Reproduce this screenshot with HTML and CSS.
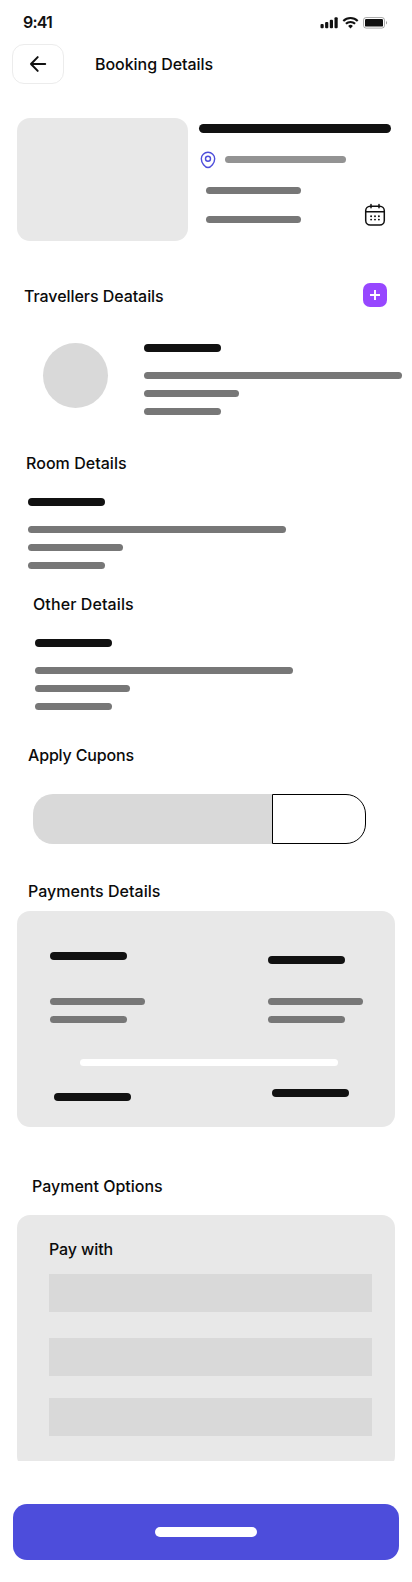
FILE: index.html
```
<!DOCTYPE html>
<html lang="en">
<head>
<meta charset="utf-8">
<title>Booking Details</title>
<link rel="stylesheet" href="styles.css">
</head>
<body>
<div class="status">
  <span class="time">9:41</span>
  <svg class="status-icons" width="70" height="14" viewBox="0 0 70 14">
    <g fill="#111">
      <rect x="0.5" y="8" width="3.2" height="4.2" rx="1"/>
      <rect x="5.1" y="6" width="3.200" height="6.200" rx="1"/>
      <rect x="9.8" y="3.700" width="3.200" height="8.500" rx="1"/>
      <rect x="14.5" y="1.300" width="3.200" height="10.900" rx="1"/>
    </g>
    <g fill="none" stroke="#111" stroke-width="2.1">
      <path d="M23.300 4.900A10.400 10.400 0 0 1 37.700 4.900"/>
      <path d="M25.900 7.800A6.600 6.600 0 0 1 35.100 7.800"/>
    </g>
    <path d="M28.100 9.900A3.600 3.600 0 0 1 32.900 9.900L30.500 12.400Z" fill="#111"/>
    <rect x="43.500" y="1.500" width="21" height="10.600" rx="2.600" fill="none" stroke="#111" stroke-opacity=".35"/>
    <rect x="45" y="3" width="18" height="7.600" rx="1.200" fill="#111"/>
    <path d="M66 5v3.600a2 2 0 0 0 0-3.600Z" fill="#111" opacity=".4"/>
  </svg>
</div>
<header class="header">
  <button class="back" aria-label="Back">
    <svg width="24" height="24" viewBox="0 0 24 24" fill="none" stroke="#111" stroke-width="2" stroke-linecap="round" stroke-linejoin="round"><path d="M19.200 12H5M11.700 5.100L5 12l6.700 6.900"/></svg>
  </button>
  <h1 class="title title-main">Booking Details</h1>
</header>
<main>
  <section class="hotel">
    <div class="photo"></div>
    <div class="hotel-info">
      <div class="bar hotel-name"></div>
      <div class="location">
        <svg width="18" height="18" viewBox="0 0 18 18" fill="none" stroke="#4d4ddb" stroke-width="1.400"><path d="M15.700 7.800c0 4.200-3.800 8.700-6.700 8.700S2.300 12 2.300 7.800A6.600 6.400 0 0 1 15.700 7.800Z"/><circle cx="9" cy="7.700" r="2.500"/></svg>
        <div class="bar address"></div>
      </div>
      <div class="stay">
        <div class="dates"><div class="bar mid"></div><div class="bar mid"></div></div>
        <svg class="calendar" width="22" height="24" viewBox="0 0 22 24" fill="none" stroke="#111" stroke-width="1.500" stroke-linecap="round"><rect x="1.700" y="3.200" width="18.600" height="18.800" rx="4.500"/><path d="M1.700 8.800h18.600M7 1.500v3.200M15 1.500v3.200"/><path stroke-width="1.900" d="M7.100 13.300h.01M11 13.300h.01M14.900 13.300h.01M7.100 16.600h.01M11 16.600h.01M14.900 16.600h.01"/></svg>
      </div>
    </div>
  </section>
  <section class="travellers">
    <div class="travellers-head">
      <h2 class="title title-travellers">Travellers Deatails</h2>
      <button class="add" aria-label="Add"><svg width="24" height="24" viewBox="0 0 24 24" stroke="#fff" stroke-width="1.900"><path d="M12 7v10M7 12h10"/></svg></button>
    </div>
    <div class="traveller">
      <div class="avatar"></div>
      <div class="lines"><div class="bar dark"></div><div class="bar long"></div><div class="bar mid"></div><div class="bar"></div></div>
    </div>
  </section>
  <section class="room">
    <h2 class="title title-room">Room Details</h2>
    <div class="lines"><div class="bar dark"></div><div class="bar long"></div><div class="bar mid"></div><div class="bar"></div></div>
  </section>
  <section class="other">
    <h2 class="title title-other">Other Details</h2>
    <div class="lines"><div class="bar dark"></div><div class="bar long"></div><div class="bar mid"></div><div class="bar"></div></div>
  </section>
  <section class="coupons">
    <h2 class="title title-coupons">Apply Cupons</h2>
    <div class="coupon"><div class="coupon-input"></div><div class="coupon-button"></div></div>
  </section>
  <section class="payments">
    <h2 class="title title-payments">Payments Details</h2>
    <div class="summary">
      <div class="columns">
        <div class="column"><div class="bar dark"></div><div class="bar mid"></div><div class="bar"></div></div>
        <div class="column column-end"><div class="bar dark"></div><div class="bar mid"></div><div class="bar"></div></div>
      </div>
      <div class="bar long divider"></div>
      <div class="total"><div class="bar dark total-label"></div><div class="bar dark"></div></div>
    </div>
  </section>
  <section class="options">
    <h2 class="title title-options">Payment Options</h2>
    <div class="methods-clip">
      <div class="methods">
        <h3 class="title title-pay">Pay with</h3>
        <div class="method"></div>
        <div class="method method-second"></div>
        <div class="method"></div>
      </div>
    </div>
  </section>
</main>
<footer class="footer"><div class="cta"><div class="cta-label"></div></div></footer>
</body>
</html>
```
FILE: styles.css
```
* { box-sizing: border-box; }
body { margin: 0; width: 412px; height: 1582px; overflow: hidden; background: #fff; font-family: Inter, "Liberation Sans", sans-serif; color: #111; }
button { padding: 0; font: inherit; cursor: pointer; }
svg { display: block; }

.title { margin: 0; height: 22px; font-size: 16px; line-height: 22px; font-weight: 500; white-space: nowrap; color: #0b0b0b; }
.bar { width: 77px; height: 7px; border-radius: 4px; background: #777; flex: none; }
.bar.dark { height: 8px; background: #111; }
.bar.mid { width: 95px; }
.bar.long { width: 258px; }
.lines { display: flex; flex-direction: column; gap: 11px; }
.lines .dark { margin-bottom: 9px; }

.status { display: flex; justify-content: space-between; height: 44px; padding: 11px 22px 0 23px; }
.time { font-size: 16px; line-height: 22px; font-weight: 600; letter-spacing: -0.8px; }
.status-icons { margin-top: 5px; }
.header { display: flex; height: 74px; padding-left: 12px; }
.back { display: flex; align-items: center; justify-content: center; width: 52px; height: 40px; background: #fff; border: 1px solid #ececec; border-radius: 12px; }
.title-main { margin: 9px 0 0 31px; letter-spacing: -0.05px; }

.hotel { display: flex; height: 165px; padding-left: 17px; gap: 11px; }
.photo { width: 171px; height: 123px; border-radius: 13px; background: #e8e8e8; }
.hotel-info { width: 192px; padding-top: 6px; }
.hotel-name { width: 192px; height: 9px; border-radius: 5px; background: #111; }
.location { display: flex; gap: 8px; height: 18px; margin-top: 18px; }
.address { width: 121px; margin-top: 5px; background: #939393; }
.stay { display: flex; justify-content: space-between; padding: 18px 5px 0 7px; }
.dates { display: flex; flex-direction: column; gap: 22px; }
.calendar { margin-top: 16px; }

.travellers { height: 169px; }
.travellers-head { display: flex; justify-content: space-between; height: 60px; padding: 0 25px 0 24px; }
.title-travellers { margin-top: 2px; letter-spacing: -0.06px; }
.add { width: 24px; height: 24px; border: 0; border-radius: 7px; background: #9747ff; }
.traveller { display: flex; gap: 36px; padding-left: 43px; }
.traveller .lines { padding-top: 1px; }
.avatar { width: 65px; height: 65px; border-radius: 50%; background: #d9d9d9; }

.room { height: 141px; padding-left: 28px; }
.title-room { margin: 0 0 24px -2px; letter-spacing: 0.04px; }
.other { height: 151px; padding-left: 35px; }
.title-other { margin: 0 0 24px -2px; letter-spacing: 0.1px; }
.coupons { height: 136px; padding-left: 28px; }
.title-coupons { letter-spacing: -0.17px; }
.coupon { display: flex; width: 333px; height: 50px; margin: 28px 0 0 5px; }
.coupon-input { width: 239px; border-radius: 20px 0 0 20px; background: #d9d9d9; }
.coupon-button { width: 94px; border: 1px solid #000; border-radius: 0 20px 20px 0; }

.payments { height: 295px; padding: 0 17px; }
.title-payments { margin: 0 0 9px 11px; letter-spacing: 0.04px; }
.summary { height: 216px; padding: 41px 0 0 33px; border-radius: 13px; background: #e8e8e8; }
.columns { display: flex; gap: 123px; }
.column { width: 95px; display: flex; flex-direction: column; gap: 11px; }
.column .dark { margin-bottom: 27px; }
.column-end { padding-top: 4px; }
.column-end .dark { margin-bottom: 23px; }
.divider { margin: 36px 0 0 30px; background: #fff; }
.total { display: flex; gap: 141px; padding: 23px 0 0 4px; }
.total-label { margin-top: 4px; }

.options { height: 329px; padding: 0 17px; }
.title-options { margin-left: 15px; }
.methods-clip { height: 246px; margin-top: 18px; overflow: hidden; }
.methods { height: 254px; padding: 23px 23px 0 32px; border-radius: 13px; background: #e8e8e8; }
.title-pay { margin: 0 0 14px; letter-spacing: -0.1px; }
.method { height: 38px; background: #d9d9d9; }
.method-second { margin: 26px 0 22px; }

.footer { padding: 0 13px; }
.cta { display: flex; align-items: center; justify-content: center; height: 56px; border-radius: 14px; background: #4d4ddb; }
.cta-label { width: 102px; height: 10px; border-radius: 5px; background: #fff; }
```
